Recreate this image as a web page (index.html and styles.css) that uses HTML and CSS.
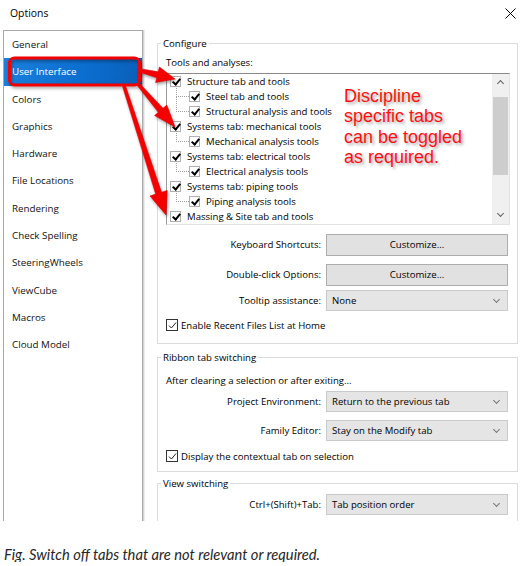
FILE: index.html
```html
<!DOCTYPE html>
<html lang="en">
<head>
    <meta charset="UTF-8">
    <meta name="viewport" content="width=device-width, initial-scale=1.0">
    <title>Options</title>
    <link rel="stylesheet" href="styles.css">
</head>
<body>
    <div class="dialog">
        <div class="titlebar">
            <span class="title">Options</span>
            <svg class="close" width="11" height="11" viewBox="0 0 11 11">
                <path d="M0.5 0.5 L10.5 10.5 M10.5 0.5 L0.5 10.5" stroke="#000" stroke-width="1"/>
            </svg>
        </div>

        <div class="main">
            <ul class="nav">
                <li>General</li>
                <li class="selected">User Interface</li>
                <li>Colors</li>
                <li>Graphics</li>
                <li>Hardware</li>
                <li>File Locations</li>
                <li>Rendering</li>
                <li>Check Spelling</li>
                <li>SteeringWheels</li>
                <li>ViewCube</li>
                <li>Macros</li>
                <li>Cloud Model</li>
            </ul>

            <div class="panel">
                <fieldset class="group configure">
                    <legend>Configure</legend>
                    <div class="hint">Tools and analyses:</div>
                    <div class="listbox">
                        <div class="tree">
                            <div class="node"><span class="check"></span>Structure tab and tools</div>
                            <div class="node child first"><span class="check"></span>Steel tab and tools</div>
                            <div class="node child"><span class="check"></span>Structural analysis and tools</div>
                            <div class="node"><span class="check"></span>Systems tab: mechanical tools</div>
                            <div class="node child first"><span class="check"></span>Mechanical analysis tools</div>
                            <div class="node"><span class="check"></span>Systems tab: electrical tools</div>
                            <div class="node child first"><span class="check"></span>Electrical analysis tools</div>
                            <div class="node"><span class="check"></span>Systems tab: piping tools</div>
                            <div class="node child first"><span class="check"></span>Piping analysis tools</div>
                            <div class="node"><span class="check"></span>Massing &amp; Site tab and tools</div>
                        </div>
                        <div class="scrollbar">
                            <span class="arrow up"></span>
                            <span class="track"><span class="thumb"></span></span>
                            <span class="arrow down"></span>
                        </div>
                        <div class="note">Discipline<br>specific tabs<br>can be toggled<br>as required.</div>
                    </div>

                    <div class="field first">
                        <label>Keyboard Shortcuts:</label>
                        <button class="btn">Customize...</button>
                    </div>
                    <div class="field">
                        <label>Double-click Options:</label>
                        <button class="btn">Customize...</button>
                    </div>
                    <div class="field tight">
                        <label>Tooltip assistance:</label>
                        <div class="select">None</div>
                    </div>
                    <div class="option">
                        <span class="box"><svg width="9" height="9" viewBox="0 0 9 9"><path d="M1 4.6 L3.4 7 L8 1.6" fill="none" stroke="#222" stroke-width="1"/></svg></span>
                        Enable Recent Files List at Home
                    </div>
                </fieldset>

                <fieldset class="group ribbon">
                    <legend>Ribbon tab switching</legend>
                    <div class="hint">After clearing a selection or after exiting...</div>
                    <div class="field tight">
                        <label>Project Environment:</label>
                        <div class="select">Return to the previous tab</div>
                    </div>
                    <div class="field">
                        <label>Family Editor:</label>
                        <div class="select">Stay on the Modify tab</div>
                    </div>
                    <div class="option">
                        <span class="box"><svg width="9" height="9" viewBox="0 0 9 9"><path d="M1 4.6 L3.4 7 L8 1.6" fill="none" stroke="#222" stroke-width="1"/></svg></span>
                        Display the contextual tab on selection
                    </div>
                </fieldset>

                <fieldset class="group views">
                    <legend>View switching</legend>
                    <div class="field tight">
                        <label>Ctrl+(Shift)+Tab:</label>
                        <div class="select">Tab position order</div>
                    </div>
                </fieldset>
            </div>
        </div>

        <!-- annotation overlay: red box and arrows -->
        <svg class="annotations" width="525" height="566" viewBox="0 0 525 566">
            <g fill="#f50000" stroke="#e00000" stroke-width="0.6">
                <rect x="9.5" y="58" width="130" height="27" rx="5" fill="none" stroke="#f50000" stroke-width="3"/>
                <polygon points="138.4,68.5 158.2,71.8 159.4,67 175,79 155.6,82.5 156.8,77.7 137.6,71.5"/>
                <polygon points="139.1,83 163,108.3 166.8,105.1 175,127 154.6,115.5 158.4,112.3 136.9,85"/>
                <polygon points="125.4,85.5 161.5,192.3 167.2,190.4 166,215 150,196 155.7,194.1 122.6,86.5"/>
            </g>
        </svg>
    </div>

    <p class="figure-caption">Fig. Switch off tabs that are not relevant or required.</p>
</body>
</html>
```

FILE: styles.css
```css
:root {
    --ui-font: 'Open Sans', 'Noto Sans', sans-serif;
    --line: #dcdcdc;
    --control: #e1e1e1;
    --control-border: #adadad;
    --select-blue: #0b6dcf;
}

* {
    box-sizing: border-box;
}

body {
    margin: 0;
    background: #fff;
    color: #000;
    font-family: var(--ui-font);
    font-size: 9.6px;
    line-height: 13px;
}

.dialog {
    position: relative;
    width: 525px;
}

.titlebar {
    height: 30px;
    display: flex;
    justify-content: space-between;
    align-items: flex-start;
    padding: 7px 9px 0 10px;
}

.title {
    font-size: 10.4px;
}

.close {
    margin-top: 1px;
}

.main {
    display: flex;
    height: 491px;
    overflow: hidden;
    padding-left: 3px;
}

.nav {
    list-style: none;
    margin: 0;
    padding: 0;
    width: 140px;
    height: 560px;
    flex-shrink: 0;
    border: 1px solid #a9a9a9;
    box-shadow: 1px 0 0 #d4d4d4, 2px 0 0 #ececec;
}

.nav li {
    height: 27.3px;
    line-height: 27.3px;
    padding-left: 8px;
    font-size: 9.8px;
    color: #111;
}

.nav li.selected {
    background: linear-gradient(100deg, #1a7fdc, var(--select-blue) 60%, #0a5fb8);
    color: #fff;
}

.panel {
    flex: 1;
    margin: 0 7px 0 14px;
    padding-top: 7px;
}

.group {
    margin: 0;
    padding: 6px 7px 11px 8px;
    border: 1px solid var(--line);
    min-width: 0;
}

.group legend {
    padding: 0 2px;
    margin-left: -5px;
    line-height: 13px;
}

.ribbon {
    margin-top: 7px;
    padding-top: 10px;
    padding-bottom: 8px;
}

.views {
    margin-top: 5px;
    padding-top: 0;
    padding-bottom: 20px;
}

.hint {
    height: 13px;
}

.listbox {
    position: relative;
    display: flex;
    margin-top: 3.5px;
    height: 152px;
    border-top: 1px solid #8a8a8a;
    border-left: 1px solid #9a9a9a;
    border-right: 1px solid #e3e3e3;
    border-bottom: 1px solid #e3e3e3;
    background: #fff;
}

.tree {
    flex: 1;
}

.node {
    position: relative;
    height: 15px;
    display: flex;
    align-items: center;
    padding-left: 3px;
    white-space: nowrap;
}

.node.child {
    padding-left: 22px;
}

.node.child::before {
    content: '';
    position: absolute;
    left: 9px;
    top: -7px;
    width: 12px;
    height: 14px;
    border-left: 1px dotted #a0a0a0;
    border-bottom: 1px dotted #a0a0a0;
}

.node.child.first::before {
    top: -3px;
    height: 10px;
}

.check {
    position: relative;
    width: 11px;
    height: 11px;
    margin-right: 6px;
    border: 1px solid #b0b0b0;
    background: #fff;
    flex-shrink: 0;
}

.check::after {
    content: '';
    position: absolute;
    left: 3px;
    top: 0;
    width: 3px;
    height: 6px;
    border-right: 2px solid #000;
    border-bottom: 2px solid #000;
    transform: rotate(40deg);
}

.scrollbar {
    width: 17px;
    display: flex;
    flex-direction: column;
    background: #f0f0f0;
}

.arrow {
    position: relative;
    height: 17px;
    flex-shrink: 0;
}

.arrow::after {
    content: '';
    position: absolute;
    left: 6px;
    width: 4px;
    height: 4px;
    border-left: 1.5px solid #606060;
    border-top: 1.5px solid #606060;
}

.arrow.up::after {
    top: 7px;
    transform: rotate(45deg);
}

.arrow.down::after {
    top: 4px;
    transform: rotate(225deg);
}

.track {
    flex: 1;
    padding-top: 6px;
}

.thumb {
    display: block;
    height: 78px;
    margin: 0 1px;
    background: #cdcdcd;
}

.note {
    position: absolute;
    left: 177px;
    top: 12px;
    font-family: 'Liberation Sans', Arial, sans-serif;
    font-size: 18px;
    line-height: 20.5px;
    color: #ff1010;
    text-shadow: 2px 2px 3px rgba(0, 0, 0, 0.35);
    pointer-events: none;
}

.field {
    display: grid;
    grid-template-columns: 155px 182px;
    column-gap: 5px;
    align-items: center;
    margin-top: 8px;
}

.field.first {
    margin-top: 9px;
}

.field.tight {
    margin-top: 4px;
}

.field label {
    text-align: right;
    white-space: nowrap;
}

.btn {
    height: 22px;
    margin: 0;
    padding: 0;
    font: inherit;
    color: #000;
    background: var(--control);
    border: 1px solid var(--control-border);
}

.select {
    position: relative;
    height: 21px;
    line-height: 19px;
    padding-left: 5px;
    background: #e5e5e5;
    border: 1px solid #cacaca;
}

.select::after {
    content: '';
    position: absolute;
    right: 8px;
    top: 6px;
    width: 4px;
    height: 4px;
    border-right: 1px solid #777;
    border-bottom: 1px solid #777;
    transform: rotate(45deg);
}

.option {
    display: flex;
    align-items: center;
    height: 13px;
    margin-top: 8px;
    white-space: nowrap;
}

.ribbon .option {
    margin-top: 9px;
}

.box {
    display: flex;
    align-items: center;
    justify-content: center;
    width: 12px;
    height: 12px;
    margin-right: 3px;
    border: 1px solid #333;
    background: #fff;
}

.annotations {
    position: absolute;
    left: 0;
    top: 0;
    pointer-events: none;
    filter: drop-shadow(1px 2px 1.5px rgba(0, 0, 0, 0.35));
}

.figure-caption {
    margin: 25px 0 0 4px;
    font-family: Lato, 'Open Sans', sans-serif;
    font-style: italic;
    font-size: 14.7px;
    line-height: 16px;
    color: #262626;
}
```
